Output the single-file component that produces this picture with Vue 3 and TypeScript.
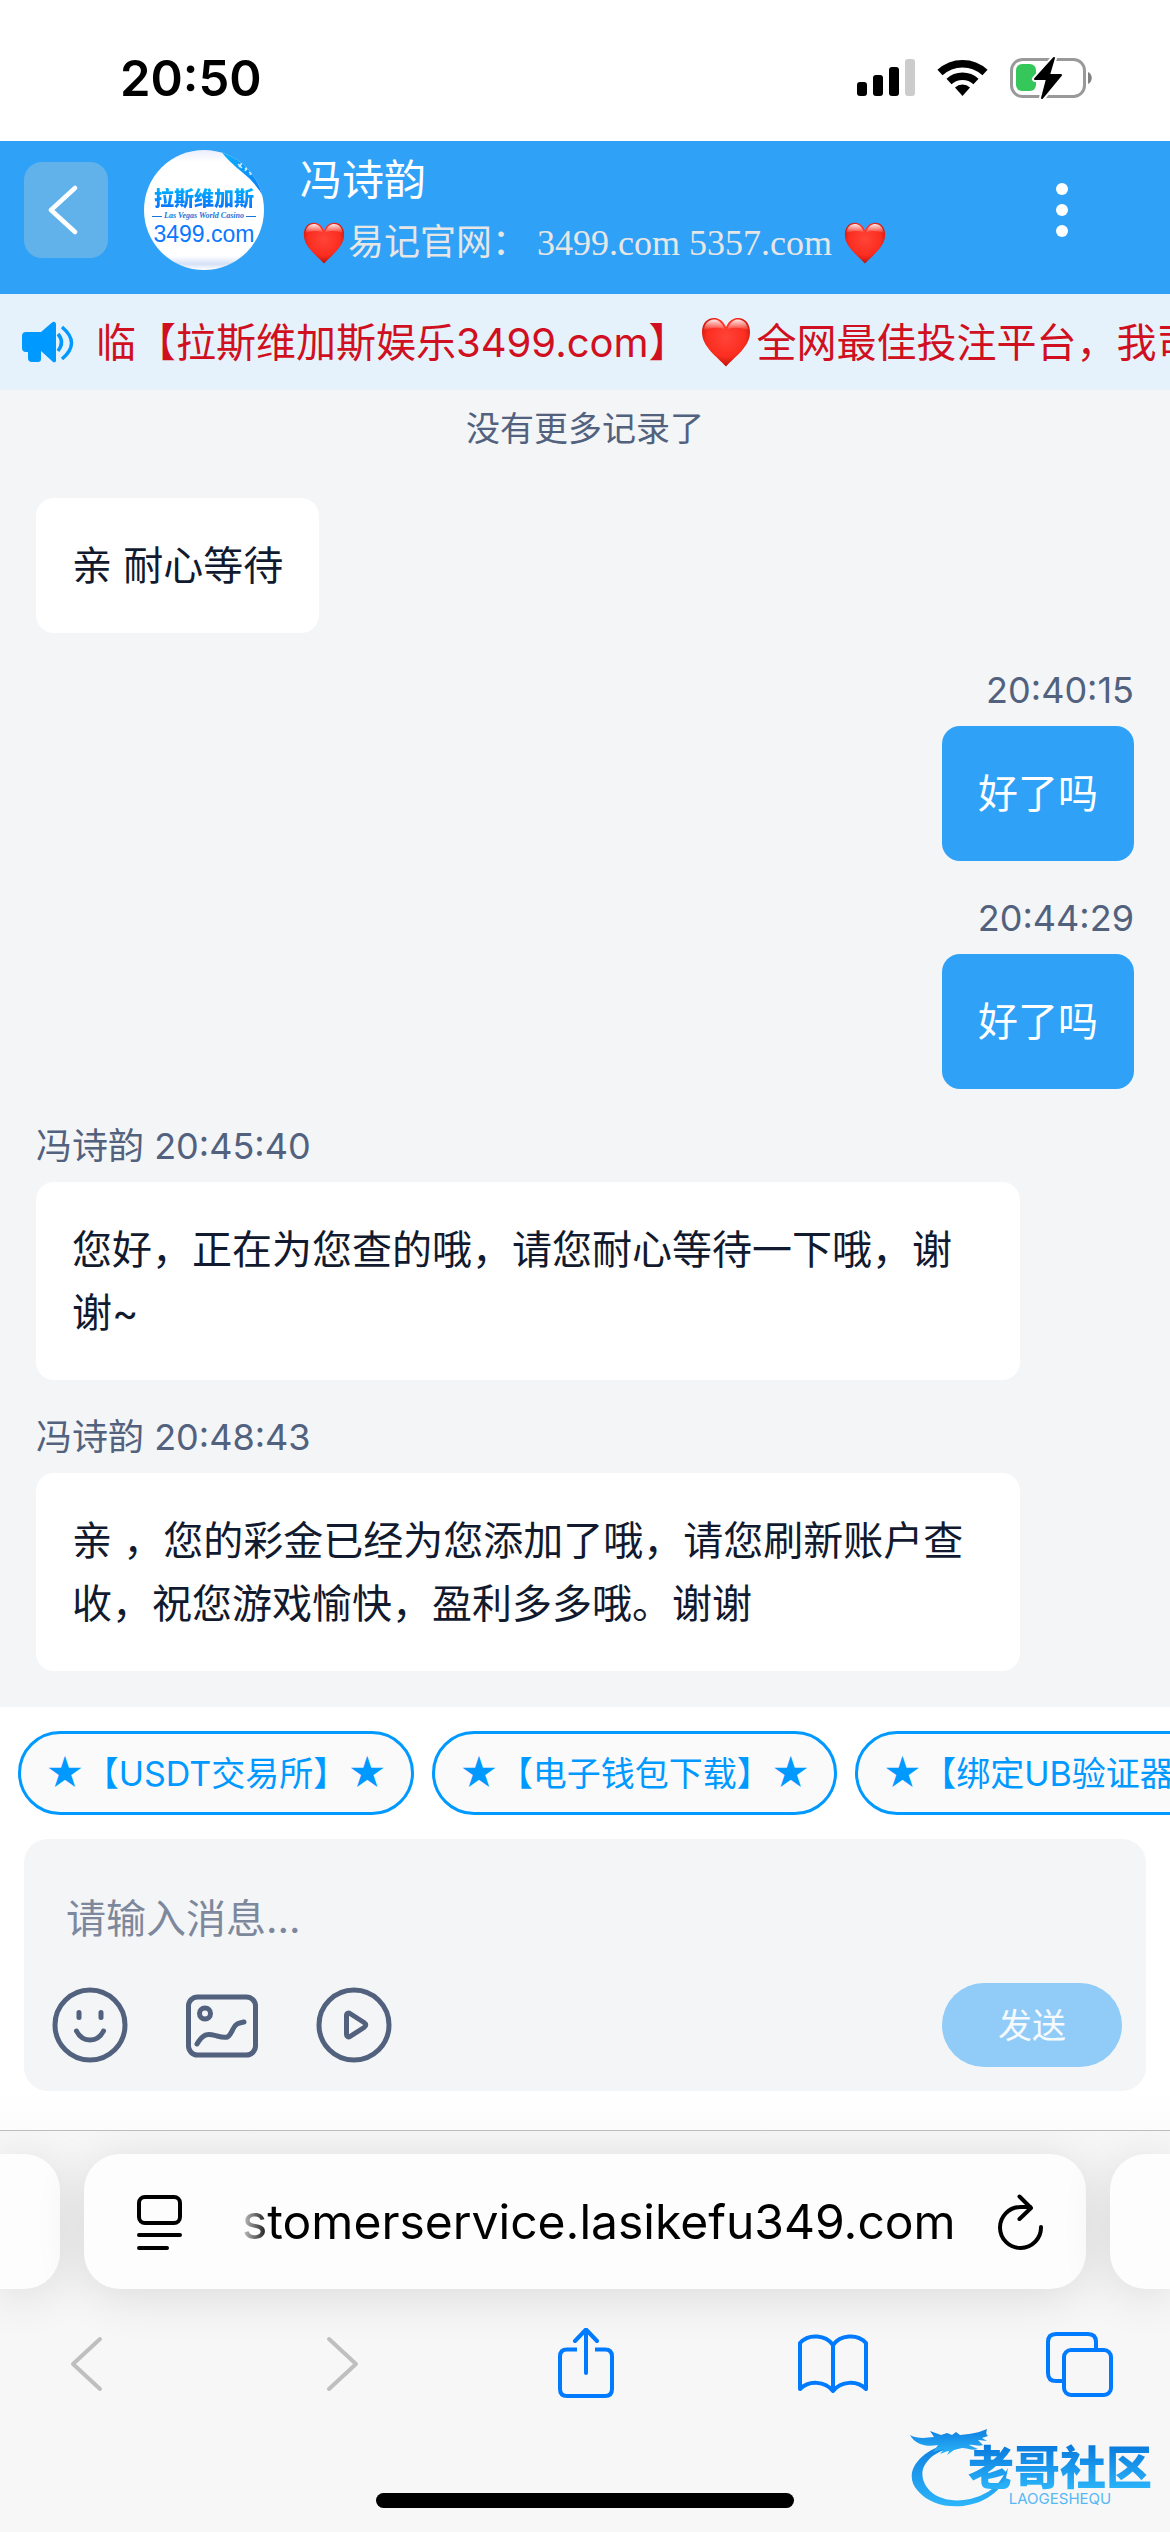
<script setup lang="ts">
import { ref } from 'vue'

interface Message {
  id: number
  side: 'agent' | 'me'
  label: string
  text: string
}

const agentName = '冯诗韵'
const draft = ref('')
const address = ref('stomerservice.lasikefu349.com')

const messages: Message[] = [
  { id: 1, side: 'agent', label: '', text: '亲 耐心等待' },
  { id: 2, side: 'me', label: '20:40:15', text: '好了吗' },
  { id: 3, side: 'me', label: '20:44:29', text: '好了吗' },
  { id: 4, side: 'agent', label: `${agentName} 20:45:40`, text: '您好，正在为您查的哦，请您耐心等待一下哦，谢谢~' },
  { id: 5, side: 'agent', label: `${agentName} 20:48:43`, text: '亲 ，您的彩金已经为您添加了哦，请您刷新账户查收，祝您游戏愉快，盈利多多哦。谢谢' },
]

const shortcuts: string[] = ['【USDT交易所】', '【电子钱包下载】', '【绑定UB验证器】']
</script>

<template>
  <div class="page">
    <svg class="defs" width="0" height="0" aria-hidden="true">
      <defs>
        <radialGradient id="heart-fill" cx="50%" cy="40%" r="62%">
          <stop offset="0" stop-color="#ff4438" />
          <stop offset="0.65" stop-color="#fb2d20" />
          <stop offset="1" stop-color="#b80d05" />
        </radialGradient>
        <linearGradient id="heart-shine" x1="0" y1="0" x2="0" y2="1">
          <stop offset="0" stop-color="#fff" stop-opacity="0.9" />
          <stop offset="1" stop-color="#fff" stop-opacity="0" />
        </linearGradient>
        <symbol id="heart" viewBox="0 0 50 50">
          <path fill="url(#heart-fill)" d="M25 10C22 3.500 17.500 1 13 1 6 1 1 6.500 1 15c0 15 15 24.500 24 34.500C34 39.500 49 30 49 15 49 6.500 44 1 37 1c-4.500 0-9 2.500-12 9Z" />
          <path fill="url(#heart-shine)" d="M23.500 12C21 5 17 2.500 13 2.500 7 2.500 3 7.500 3 13.500c6-3.500 14-3.500 20.500-1.500ZM26.500 12C29 5 33 2.500 37 2.500c6 0 10 5 10 11-6-3.500-14-3.500-20.500-1.500Z" />
        </symbol>
      </defs>
    </svg>

    <div class="status">
      <span class="clock">20:50</span>
      <svg class="status-icons" viewBox="0 0 236 44" width="236" height="44" aria-hidden="true">
        <rect x="0" y="26" width="10" height="14" rx="3" />
        <rect x="16" y="19" width="10" height="21" rx="3" />
        <rect x="32" y="11" width="10" height="29" rx="3" />
        <rect x="48" y="3" width="10" height="37" rx="3" fill="#ccc" />
        <g fill="none" stroke="#000">
          <path stroke-width="7.500" d="M83 16.500a33 33 0 0 1 45 0" />
          <path stroke-width="7.500" d="M92 25.500a20 20 0 0 1 27 0" />
        </g>
        <path d="M98 31.500a11 11 0 0 1 15 0L105.500 40Z" />
        <rect x="154.500" y="3.500" width="73" height="37" rx="11" fill="none" stroke="#999" stroke-width="3" />
        <path fill="#808080" d="M231 16c5 2 5 10 0 12Z" />
        <rect x="159" y="8" width="20" height="27" rx="6" fill="#35c759" />
        <path stroke="#fff" stroke-width="6" stroke-linejoin="round" d="M197 2 178 23h12l-5 19 19-23h-12Z" />
        <path stroke="#000" stroke-width="2" stroke-linejoin="round" d="M197 2 178 23h12l-5 19 19-23h-12Z" />
      </svg>
    </div>

    <header class="header">
      <button class="back" type="button" aria-label="返回">
        <svg viewBox="0 0 36 50" width="36" height="50" fill="none" stroke="#fff" stroke-width="4.500" stroke-linecap="round" stroke-linejoin="round">
          <path d="M27 3 3 25l24 22" />
        </svg>
      </button>
      <div class="avatar">
        <strong class="avatar-name">拉斯维加斯</strong>
        <span class="avatar-sub">Las Vegas World Casino</span>
        <span class="avatar-site">3499.com</span>
        <svg class="fold" viewBox="0 0 120 120" width="120" height="120" aria-hidden="true">
          <defs>
            <linearGradient id="fold-fill" x1="0" y1="0" x2="1" y2="1">
              <stop offset="0" stop-color="#0db4fb" />
              <stop offset="1" stop-color="#067bfb" />
            </linearGradient>
          </defs>
          <path fill="url(#fold-fill)" d="M76 0Q84 11 98 22T120 48V0Z" />
          <path fill="none" stroke="#fff" stroke-width="1.500" d="m94 14 4 4m0-5-3 4m6 1 2 2m0-3-2 4m4 1 3 2m-1-3-1 4" opacity="0.800" />
        </svg>
      </div>
      <div class="who">
        <h1 class="who-name">{{ agentName }}</h1>
        <p class="who-sub"><svg class="heart-sm"><use href="#heart" /></svg>易记官网： 3499.com 5357.com <svg class="heart-sm"><use href="#heart" /></svg></p>
      </div>
      <button class="more" type="button" aria-label="更多">
        <svg viewBox="0 0 12 54" width="12" height="54" fill="#fff">
          <circle cx="6" cy="6" r="6" />
          <circle cx="6" cy="27" r="6" />
          <circle cx="6" cy="48" r="6" />
        </svg>
      </button>
    </header>

    <div class="notice">
      <svg class="horn" viewBox="0 0 52 42" width="52" height="42" aria-hidden="true">
        <path fill="#09f" d="M4 11h15L30 1.500c2-1.500 4-.500 4 2v36c0 2-2 2.500-3.500 1L19 30v8a3 3 0 0 1-3 3h-6a4 4 0 0 1-4-4v-6H4a4 4 0 0 1-4-4V15a4 4 0 0 1 4-4Z" />
        <path fill="none" stroke="#09f" stroke-width="3.500" d="M36 13q7 8 0 17M40 6q19 16 0 32" />
      </svg>
      <p class="notice-text">临【拉斯维加斯娱乐3499.com】<svg class="heart-lg"><use href="#heart" /></svg>全网最佳投注平台，我司</p>
    </div>

    <main class="chat">
      <p class="no-more">没有更多记录了</p>
      <article v-for="m in messages" :key="m.id" class="msg" :class="m.side">
        <div v-if="m.label" class="label">{{ m.label }}</div>
        <p class="bubble">{{ m.text }}</p>
      </article>
    </main>

    <section class="composer">
      <div class="chips">
        <button v-for="s in shortcuts" :key="s" class="chip" type="button"><span class="star">★</span>{{ s }}<span class="star">★</span></button>
      </div>
      <form class="box" @submit.prevent>
        <textarea v-model="draft" class="field" rows="1" placeholder="请输入消息..." aria-label="请输入消息"></textarea>
        <div class="tools">
          <button class="tool" type="button" aria-label="表情">
            <svg viewBox="0 0 78 78" width="78" height="78">
              <circle cx="39" cy="39" r="35" />
              <path d="M28 26.500v5M50 26.500v5M25.500 45q4.500 9 13.500 9t13.500-9" />
            </svg>
          </button>
          <button class="tool" type="button" aria-label="图片">
            <svg viewBox="0 0 78 78" width="78" height="78">
              <rect x="5.500" y="11" width="67" height="58" rx="9" />
              <circle cx="22" cy="27.500" r="5.500" />
              <path d="M14 58c7-12 12-10 20-8 12 3 12 1 16-7 3-6 6-6 11-7" />
            </svg>
          </button>
          <button class="tool" type="button" aria-label="视频">
            <svg viewBox="0 0 78 78" width="78" height="78">
              <circle cx="39" cy="39" r="35" />
              <path d="M31.500 29.500v19c0 2.500 2 3 3.500 2l14-9q3.500-2.500 0-5l-14-9c-1.500-1-3.500-.500-3.500 2Z" />
            </svg>
          </button>
          <button class="send" type="submit">发送</button>
        </div>
      </form>
    </section>

    <footer class="browser">
      <div class="tabs">
        <div class="tab stub left"></div>
        <div class="tab current">
          <button class="plain" type="button" aria-label="页面设置">
            <svg viewBox="0 0 46 56" width="46" height="56" fill="none" stroke="#000" stroke-width="4" stroke-linecap="round">
              <rect x="2" y="3" width="41" height="26" rx="6" />
              <path d="M2 41h41M2 54h28" />
            </svg>
          </button>
          <input v-model="address" class="url" type="text" aria-label="网址" />
          <button class="plain" type="button" aria-label="刷新">
            <svg viewBox="0 0 46 56" width="46" height="56" fill="none" stroke="#000" stroke-width="4" stroke-linecap="round" stroke-linejoin="round">
              <path d="M43 33A20.500 20.500 0 1 1 22.500 13h10M21.500 2.500 33 14 21.500 25" />
            </svg>
          </button>
        </div>
        <div class="tab stub right"></div>
      </div>
      <nav class="bar">
        <button class="plain off" type="button" aria-label="后退">
          <svg viewBox="0 0 72 72" width="72" height="72"><path d="M50 11 23 36l27 25" /></svg>
        </button>
        <button class="plain off" type="button" aria-label="前进">
          <svg viewBox="0 0 72 72" width="72" height="72"><path d="m30 11 27 25-27 25" /></svg>
        </button>
        <button class="plain" type="button" aria-label="分享">
          <svg viewBox="0 0 72 72" width="72" height="72"><path stroke-linecap="butt" d="M30 21.500H20q-7 0-7 7V61q0 7 7 7h38q7 0 7-7V28.500q0-7-7-7H48" /><path d="M39 45V2M28 13 39 1.500 50 13" /></svg>
        </button>
        <button class="plain" type="button" aria-label="书签">
          <svg viewBox="0 0 72 72" width="72" height="72"><path d="M37 17v46M37 17C30 7 13 5 4 15v46c9-9 25-8 33 2 8-10 24-11 33-2V15C61 5 44 7 37 17Z" /></svg>
        </button>
        <button class="plain" type="button" aria-label="标签页">
          <svg viewBox="0 0 72 72" width="72" height="72"><rect x="20" y="22" width="47" height="45" rx="7" /><path stroke-linecap="butt" d="M52 22v-8q0-8-8-8H12q-8 0-8 8v31q0 8 8 8h8" /></svg>
        </button>
      </nav>
      <div class="home"></div>
      <div class="mark">
        <svg class="dragon" viewBox="0 0 100 82" width="100" height="82" aria-hidden="true">
          <defs>
            <linearGradient id="dragon-fill" x1="0" y1="0" x2="0" y2="1">
              <stop offset="0" stop-color="#0f7fe0" />
              <stop offset="1" stop-color="#2cb5fa" />
            </linearGradient>
          </defs>
          <g fill="url(#dragon-fill)">
            <path d="M40 17C8 25-8 48 8 65c20 24 72 20 88-13l2-10-6 10C78 75 38 82 20 65 3 47 16 27 44 21Z" />
            <path d="M0 9c7 4 16 3 24 2l-4-6 11 4 6-2 5 2 4-3 4 3 9-1c8-1 13-3 18-5-1 4-1 5 1 7l-6 2 5 3-9-1 5 5c-5 2-9-1-14 0l9 4c-6 2-11-1-16-1l-8 2-7 5c1-2 3-4 1-4l-8 3 4-5-11 3 5-7c-9 2-22 1-28-10Z" />
          </g>
        </svg>
        <div class="mark-text">
          <strong class="mark-name">老哥社区</strong>
          <span class="mark-sub">LAOGESHEQU</span>
        </div>
      </div>
    </footer>
  </div>
</template>

<style>
body {
  margin: 0;
  background: #fff;
}
</style>

<style scoped>
.page {
  display: flex;
  flex-direction: column;
  min-height: 100vh;
  overflow: hidden;
  background: #fff;
  font-family: Inter, "Noto Sans CJK SC", sans-serif;
  font-size: 40px;
  line-height: 63px;
  color: #111a2e;
}
.page *,
.page {
  box-sizing: border-box;
}
h1,
p {
  margin: 0;
  font-weight: 400;
}
button,
input,
textarea {
  margin: 0;
  padding: 0;
  border: 0;
  background: none;
  font: inherit;
  color: inherit;
}
button {
  display: flex;
  align-items: center;
  justify-content: center;
  flex: none;
}
.defs {
  position: absolute;
}

.status {
  display: flex;
  align-items: center;
  justify-content: space-between;
  height: 141px;
  padding: 15px 77px 0 120px;
}
.clock {
  font-size: 49px;
  font-weight: 600;
  color: #000;
}

.header {
  display: flex;
  align-items: center;
  padding: 9px 60px 24px 24px;
  background: #2fa1f7;
}
.back {
  width: 84px;
  height: 96px;
  margin-right: 36px;
  border-radius: 18px;
  background: #61b1eb;
}
.avatar {
  position: relative;
  display: flex;
  flex-direction: column;
  align-items: center;
  flex: none;
  width: 120px;
  height: 120px;
  margin-right: 36px;
  padding-top: 38px;
  overflow: hidden;
  border-radius: 50%;
  background: linear-gradient(#e9eefc, #fff 12px, #fff 106px, #d5e0f7 114px, #fff);
  white-space: nowrap;
}
.avatar-name {
  font-size: 20px;
  font-weight: 900;
  line-height: 22px;
  background: linear-gradient(#00b4ff, #0a6cff);
  background-clip: text;
  color: transparent;
}
.avatar-sub {
  display: flex;
  align-items: center;
  gap: 2px;
  font-family: "Liberation Serif", serif;
  font-size: 8px;
  font-style: italic;
  font-weight: 700;
  line-height: 12px;
  color: #1b74d8;
}
.avatar-sub::before,
.avatar-sub::after {
  content: "";
  width: 10px;
  height: 1px;
  background: #1b74d8;
}
.avatar-site {
  font-family: "Liberation Sans", sans-serif;
  font-size: 23px;
  line-height: 24px;
  color: #0a78ff;
}
.fold {
  position: absolute;
  top: 0;
  right: 0;
}
.who {
  flex: 1;
  min-width: 0;
  white-space: nowrap;
}
.who-name {
  font-size: 42px;
  line-height: 60px;
  color: #fff;
}
.who-sub {
  display: flex;
  align-items: center;
  padding-top: 6px;
  font-family: "Liberation Serif", "Noto Sans CJK SC", serif;
  font-size: 36px;
  line-height: 54px;
  color: #e6e6e6;
  white-space: pre;
}
.heart-sm {
  width: 44px;
  height: 42px;
  margin: 0 2px;
}
.more {
  width: 96px;
  height: 96px;
}

.notice {
  display: flex;
  align-items: center;
  height: 96px;
  padding-left: 22px;
  overflow: hidden;
  background: #e6f2fb;
}
.horn {
  flex: none;
  margin-right: 22px;
}
.notice-text {
  display: flex;
  align-items: center;
  flex: none;
  color: #d01020;
  white-space: nowrap;
}
.heart-lg {
  width: 50px;
  height: 50px;
  margin: 0 6px 0 12px;
}

.chat {
  flex: 1;
  padding: 12px 36px 36px;
  background: #f3f5f7;
}
.no-more {
  margin-bottom: 42px;
  font-size: 34px;
  line-height: 54px;
  text-align: center;
  color: #52617d;
}
.msg {
  display: flex;
  flex-direction: column;
  align-items: flex-start;
}
.msg.me {
  align-items: flex-end;
}
.label {
  margin: 30px 0 9px;
  font-size: 36px;
  line-height: 54px;
  color: #52617d;
}
.bubble {
  max-width: calc(100% - 114px);
  padding: 36px;
  border-radius: 18px;
  background: #fff;
}
.me .bubble {
  background: #2fa1f7;
  color: #fff;
}

.composer {
  padding: 24px 24px 39px;
  background: linear-gradient(#fff 90%, #fcfcfc);
}
.chips {
  display: flex;
  gap: 18px;
  margin: 0 -24px 24px;
  padding-left: 18px;
  overflow: hidden;
}
.chip {
  height: 84px;
  padding: 0 24px;
  border: 3px solid #09f;
  border-radius: 42px;
  background: #fafafa;
  font-size: 34px;
  color: #09f;
  white-space: nowrap;
}
.star {
  font-size: 38px;
}
.box {
  padding-bottom: 24px;
  border-radius: 24px;
  background: #f3f5f7;
}
.field {
  display: block;
  width: 100%;
  height: 144px;
  padding: 48px 42px 33px;
  outline: 0;
  overflow: hidden;
  resize: none;
}
.field::placeholder {
  color: #7d889c;
  opacity: 1;
}
.tools {
  display: flex;
  align-items: center;
  gap: 54px;
  padding: 0 24px 0 27px;
}
.tool svg {
  fill: none;
  stroke: #52617d;
  stroke-width: 5;
  stroke-linecap: round;
  stroke-linejoin: round;
}
.send {
  width: 180px;
  height: 84px;
  margin-left: auto;
  border-radius: 42px;
  background: #91ccf8;
  font-size: 34px;
  color: #f6fafd;
}

.browser {
  position: relative;
  padding: 23px 0 24px;
  overflow: hidden;
  border-top: 1px solid #bcbebd;
  background: #f7f7f7;
}
.tabs {
  display: flex;
  gap: 24px;
}
.tab {
  height: 135px;
  border-radius: 36px;
  background: #fdfdfd;
  box-shadow: 0 6px 50px rgba(0, 0, 0, 0.12);
}
.stub {
  width: 60px;
}
.stub.left {
  border-radius: 0 36px 36px 0;
}
.stub.right {
  border-radius: 36px 0 0 36px;
}
.current {
  display: flex;
  align-items: center;
  flex: 1;
  min-width: 0;
  padding: 0 42px 0 53px;
}
.url {
  flex: 1;
  min-width: 0;
  height: 81px;
  margin: 0 36px 0 59px;
  outline: 0;
  font-size: 48px;
  color: #000;
  mask-image: linear-gradient(90deg, rgba(0, 0, 0, 0.2), #000 28px);
}
.bar {
  display: flex;
  justify-content: space-between;
  margin: 39px 54px 93px 50px;
}
.bar svg {
  fill: none;
  stroke: #007aff;
  stroke-width: 4;
  stroke-linecap: round;
  stroke-linejoin: round;
}
.bar .off svg {
  stroke: #bfbfbf;
}
.home {
  width: 418px;
  height: 15px;
  margin: 0 auto;
  border-radius: 8px;
  background: #000;
}
.mark {
  position: absolute;
  right: 18px;
  bottom: 24px;
  display: flex;
}
.dragon {
  margin-right: -42px;
}
.mark-text {
  display: flex;
  flex-direction: column;
  align-items: center;
  padding-top: 18px;
}
.mark-name {
  font-size: 46px;
  font-weight: 900;
  line-height: 46px;
  background: linear-gradient(#0878dc, #2cb5fa);
  background-clip: text;
  color: transparent;
}
.mark-sub {
  font-size: 15px;
  line-height: 18px;
  color: #55b8f5;
}
</style>
